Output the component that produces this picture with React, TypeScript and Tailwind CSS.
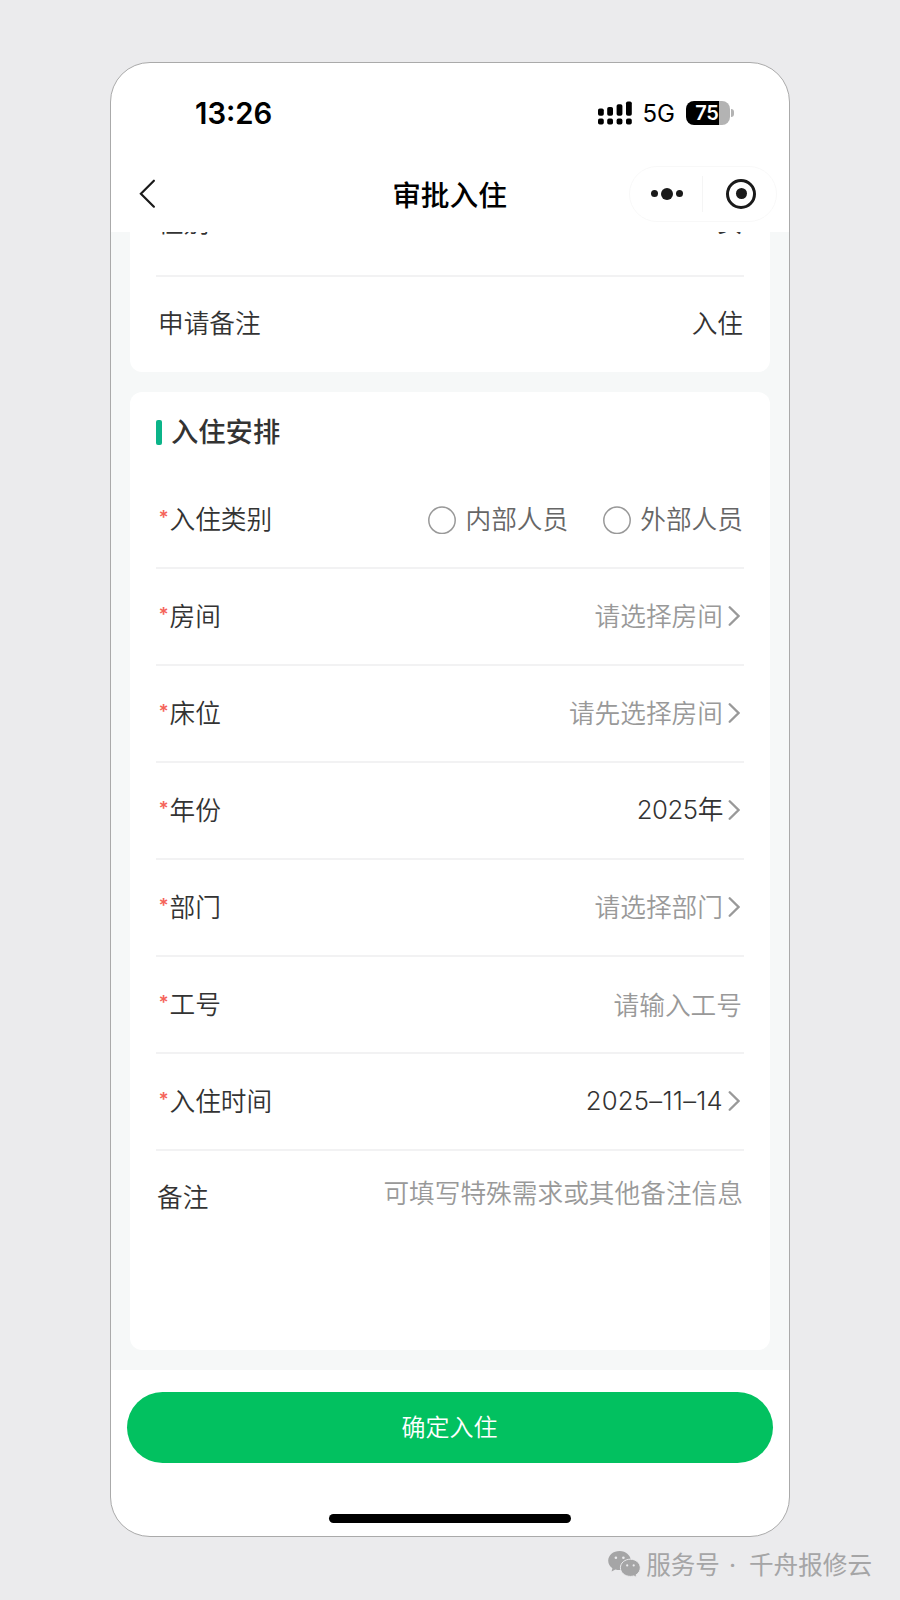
import type { ReactNode } from "react";

interface FormRow {
  /** Field label */
  label: string;
  /** Selected value or placeholder text */
  text: string;
  /** Placeholder text is drawn muted */
  muted?: boolean;
  /** Plain inputs have no arrow */
  input?: boolean;
  /** Extra classes for the value text */
  className?: string;
}

const formRows: FormRow[] = [
  { label: "房间", text: "请选择房间", muted: true },
  { label: "床位", text: "请先选择房间", muted: true },
  { label: "年份", text: "2025年", className: "tracking-[-0.4px]" },
  { label: "部门", text: "请选择部门", muted: true },
  { label: "工号", text: "请输入工号", muted: true, input: true },
  { label: "入住时间", text: "2025–11–14", className: "tracking-[0.25px]" },
];

function SignalIcon() {
  return (
    <svg width="34" height="24" viewBox="0 0 34 24" fill="#000">
      <rect x="0" y="7.5" width="5.8" height="7.2" rx="1.8" />
      <rect x="9.2" y="6" width="5.8" height="8.7" rx="1.8" />
      <rect x="18.6" y="3.2" width="5.8" height="11.5" rx="1.8" />
      <rect x="28" y="0.4" width="5.8" height="14.3" rx="1.8" />
      <rect x="0" y="17.6" width="5.8" height="6" rx="1.8" />
      <rect x="9.2" y="17.6" width="5.8" height="6" rx="1.8" />
      <rect x="18.6" y="17.6" width="5.8" height="6" rx="1.8" />
      <rect x="28" y="17.6" width="5.8" height="6" rx="1.8" />
    </svg>
  );
}

function Battery() {
  return (
    <div className="flex items-center gap-px">
      <div className="flex h-6 w-11 items-center justify-center overflow-hidden rounded-[8px] bg-[linear-gradient(to_right,#000_75%,#b3b3b3_75%)] pr-0.5 text-[20px] font-semibold leading-none tracking-[-0.3px] text-white">
        75
      </div>
      <div className="h-2 w-[3px] rounded-r-full bg-[#b3b3b3]" />
    </div>
  );
}

function Chevron() {
  return (
    <svg
      className="mr-[4px] ml-[5px] shrink-0"
      width="12"
      height="22"
      viewBox="0 0 12 22"
      fill="none"
      stroke="#999"
      strokeWidth="2.3"
      strokeLinecap="round"
    >
      <path d="M1.7 2.2 L10.5 11 L1.7 19.8" />
    </svg>
  );
}

function Label({ children, required }: { children: ReactNode; required?: boolean }) {
  return (
    <span className="flex items-center pl-[1px] text-[#333]">
      {required && (
        <span className="w-[12.5px] pb-1 pl-[1.5px] text-[19px] font-semibold leading-none text-[#f5645a]">*</span>
      )}
      {children}
    </span>
  );
}

function Radio({ label }: { label: string }) {
  return (
    <div className="flex items-center">
      <svg className="mr-[9.5px]" width="28" height="28" viewBox="0 0 28 28" fill="none">
        <circle cx="14" cy="14.3" r="13.2" stroke="#999" strokeWidth="1.5" />
      </svg>
      <span className="text-[#666]">{label}</span>
    </div>
  );
}

function WechatIcon() {
  return (
    <svg className="mb-px" width="33" height="27" viewBox="0 0 33 27">
      <path
        fill="#a5a5a6"
        d="M11.7 0C5.2 0 0.2 4.2 0.2 9.8c0 3.1 1.7 5.8 4.2 7.5l-.8 3.1 3.8-1.9c1.3.4 2.7.6 4.3.6 6.2 0 11.2-4.1 11.2-9.3S17.9 0 11.7 0z"
      />
      <path
        fill="#a5a5a6"
        stroke="#ebebed"
        strokeWidth="1"
        d="M22.4 8.2c-5.6 0-10 3.8-10 8.6s4.4 8.6 10 8.6c1.2 0 2.4-.2 3.4-.5l3 1.6-.7-2.7c2.5-1.5 4.2-4 4.2-7 0-4.8-4.4-8.6-9.9-8.6z"
      />
      <circle cx="7.9" cy="6.7" r="1.3" fill="#ebebed" />
      <circle cx="15.4" cy="6.7" r="1.3" fill="#ebebed" />
      <circle cx="19.2" cy="14.4" r="1.1" fill="#ebebed" />
      <circle cx="25.7" cy="14.4" r="1.1" fill="#ebebed" />
    </svg>
  );
}

export default function App() {
  return (
    <div className="flex h-[1600px] w-[900px] flex-col items-center bg-[#ebebed] pt-[62px] font-['Inter','Noto_Sans_CJK_SC',sans-serif]">
      <div className="flex h-[1475px] w-[680px] shrink-0 flex-col overflow-hidden rounded-[40px] border border-[#aaa] bg-white">
        {/* Status bar */}
        <div className="flex h-[99px] shrink-0 items-center justify-between pr-[55px] pl-[84px]">
          <span className="pt-[2px] text-[29.3px] font-semibold leading-none text-black">13:26</span>
          <div className="flex items-center">
            <SignalIcon />
            <span className="mr-[11px] ml-[11px] pt-[3px] text-[24px] leading-none text-black">5G</span>
            <Battery />
          </div>
        </div>

        {/* Navigation bar */}
        <div className="grid h-[70px] shrink-0 grid-cols-[1fr_auto_1fr] items-center pb-[7px] pr-[12px] pl-[27px]">
          <svg width="18" height="30" viewBox="0 0 18 30" fill="none" stroke="#1a1a1a" strokeWidth="2.2" strokeLinecap="round">
            <path d="M15.9 1.7 L2.9 14.7 L15.9 27.7" />
          </svg>
          <h1 className="pt-[5px] pr-[16px] text-[28.7px] font-medium leading-none text-black">审批入住</h1>
          <div className="flex h-14 w-[148px] items-center justify-self-end rounded-full border border-[#f8f8f8]">
            <div className="flex h-9 flex-1 items-center justify-center gap-[3px] border-r border-[#f5f5f5] pl-[2px]">
              <span className="size-[7px] rounded-full bg-[#1a1a1a]" />
              <span className="size-3 rounded-full bg-[#1a1a1a]" />
              <span className="size-[7px] rounded-full bg-[#1a1a1a]" />
            </div>
            <div className="flex flex-1 items-center justify-center pl-[3px]">
              <span className="flex size-[30px] items-center justify-center rounded-full border-[3px] border-[#1a1a1a]">
                <span className="size-[11px] rounded-full bg-[#1a1a1a]" />
              </span>
            </div>
          </div>
        </div>

        {/* Scrolled content */}
        <main className="flex h-[1138px] shrink-0 flex-col gap-5 overflow-hidden bg-[#f6f8f8] px-[19px] text-[25.7px] font-[350] leading-none">
          <section className="flex h-[140px] shrink-0 flex-col justify-end overflow-hidden rounded-b-xl bg-white px-[26px] text-[#333]">
            <div className="flex h-[97px] shrink-0 items-center justify-between border-b-2 border-[#f2f2f3] pr-px pb-[9px] pl-[2px]">
              <span>性别</span>
              <span>女</span>
            </div>
            <div className="flex h-[95px] shrink-0 items-center justify-between pr-px pb-px pl-[2px]">
              <span>申请备注</span>
              <span>入住</span>
            </div>
          </section>

          <section className="h-[958px] shrink-0 rounded-xl bg-white px-[26px]">
            <div className="flex h-20 items-center">
              <span className="mr-[9px] h-[25px] w-1.5 rounded-[2px] bg-[#0bb489]" />
              <h2 className="pt-[2px] text-[27.3px] font-medium leading-none text-[#333]">入住安排</h2>
            </div>

            <div className="flex h-[97px] items-center justify-between border-b-2 border-[#f2f2f3] pr-px">
              <Label required>入住类别</Label>
              <div className="flex gap-[34.5px]">
                <Radio label="内部人员" />
                <Radio label="外部人员" />
              </div>
            </div>

            {formRows.map((row) => (
              <div key={row.label} className="flex h-[97px] items-center justify-between border-b-2 border-[#f2f2f3]">
                <Label required>{row.label}</Label>
                <div className={row.input ? "flex items-center pt-[3px] pr-[2px]" : "flex items-center"}>
                  <span className={`${row.muted ? "text-[#999]" : "pb-[2px] text-[#333]"} ${row.className ?? ""}`}>
                    {row.text}
                  </span>
                  {!row.input && <Chevron />}
                </div>
              </div>
            ))}

            <div className="flex justify-between pr-px pl-px">
              <span className="pt-[34px] text-[#333]">备注</span>
              <span className="pt-[30px] text-[#999]">可填写特殊需求或其他备注信息</span>
            </div>
          </section>
        </main>

        {/* Submit */}
        <div className="flex flex-col items-center px-4 pt-[22px]">
          <button className="h-[71px] w-full rounded-full bg-[#02c160] pr-px text-[24px] font-[350] leading-none text-white">
            确定入住
          </button>
          <div className="mt-[51px] h-[9px] w-[242px] rounded-full bg-black" />
        </div>
      </div>

      {/* Account signature */}
      <div className="mt-[10px] flex items-center self-end pr-7 text-[24.6px] text-[#a5a5a6]">
        <WechatIcon />
        <span className="ml-[5px]">服务号</span>
        <span className="mr-[13px] ml-[9px]">·</span>
        <span>千舟报修云</span>
      </div>
    </div>
  );
}
